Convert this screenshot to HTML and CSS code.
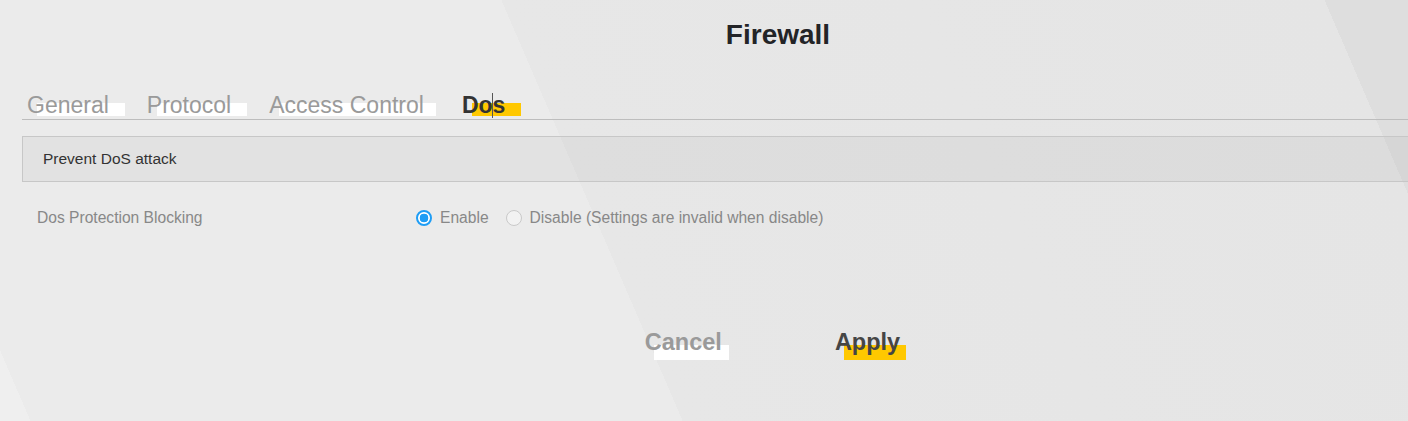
FILE: index.html
```html
<!DOCTYPE html>
<html lang="en">
<head>
<meta charset="utf-8">
<title>Firewall</title>
<link rel="stylesheet" href="styles.css">
</head>
<body>
<div class="page">
  <h1 class="title">Firewall</h1>
  <nav class="tabs">
    <span class="tab">General</span>
    <span class="tab">Protocol</span>
    <span class="tab">Access Control</span>
    <span class="tab active">Dos<span class="caret"></span></span>
  </nav>
  <div class="section">Prevent DoS attack</div>
  <div class="row">
    <div class="row-label">Dos Protection Blocking</div>
    <div class="radios">
      <label class="radio"><span class="dot checked"></span>Enable</label>
      <label class="radio"><span class="dot"></span>Disable (Settings are invalid when disable)</label>
    </div>
  </div>
  <div class="buttons">
    <span class="btn cancel">Cancel</span>
    <span class="btn apply">Apply</span>
  </div>
</div>
</body>
</html>
```

FILE: styles.css
```css
html, body {
  margin: 0;
  padding: 0;
}
body {
  width: 1408px;
  height: 421px;
  overflow: hidden;
  font-family: "Liberation Sans", Arial, sans-serif;
  background: linear-gradient(66.7deg,
    #efefef 0, #efefef 28px,
    #ebebeb 28px, #ebebeb 627px,
    #e7e7e7 627px, #e5e5e5 1383px,
    #dedede 1383px, #dedede 100%);
}
.page {
  margin-left: 22px;
  width: 1512px;
}
.title {
  margin: 0;
  padding-top: 19px;
  height: 92px;
  box-sizing: border-box;
  text-align: center;
  font-size: 28px;
  line-height: 32px;
  font-weight: bold;
  color: #232427;
}
.tabs {
  display: flex;
  gap: 22px;
  padding-left: 5px;
  border-bottom: 1px solid #bdbdbd;
}
.tab {
  position: relative;
  z-index: 0;
  font-size: 23px;
  line-height: 27px;
  color: #9a9a9a;
  padding-right: 16px;
}
.tab::before {
  content: "";
  position: absolute;
  z-index: -1;
  left: 10px;
  right: 0;
  top: 11px;
  height: 13px;
  background: #ffffff;
}
.tab:nth-child(3)::before {
  right: 4px;
}
.tab.active {
  font-weight: bold;
  color: #333333;
}
.tab.active::before {
  background: #ffc800;
}
.caret {
  position: absolute;
  left: 30px;
  top: 1px;
  width: 1px;
  height: 25px;
  background: #555555;
}
.section {
  margin-top: 16px;
  height: 46px;
  box-sizing: border-box;
  border: 1px solid #c7c7c7;
  background: rgba(0, 0, 0, 0.035);
  padding-left: 20px;
  font-size: 15.5px;
  line-height: 44px;
  color: #333333;
}
.row {
  display: grid;
  grid-template-columns: 379px auto;
  margin-top: 21px;
  padding-left: 15px;
  height: 30px;
  align-items: center;
  font-size: 15.6px;
  color: #888888;
}
.radios {
  display: flex;
  align-items: center;
  gap: 17px;
}
.radio {
  display: flex;
  align-items: center;
  gap: 8px;
}
.dot {
  width: 16px;
  height: 16px;
  box-sizing: border-box;
  border-radius: 50%;
  border: 1px solid #c9c9c9;
  background: #f2f2f2;
}
.dot.checked {
  border: 2px solid #1e9df5;
  background: radial-gradient(circle, #1e9df5 0, #1e9df5 4.2px, #ffffff 4.6px);
}
.buttons {
  display: flex;
  justify-content: center;
  gap: 106px;
  margin-top: 94px;
  padding-right: 5px;
}
.btn {
  position: relative;
  z-index: 0;
  font-size: 23.5px;
  line-height: 30px;
  font-weight: bold;
  padding-right: 7px;
}
.btn::before {
  content: "";
  position: absolute;
  z-index: -1;
  left: 9px;
  right: 0;
  top: 18px;
  height: 15px;
}
.cancel {
  color: #9a9a9a;
}
.cancel::before {
  background: #ffffff;
}
.apply {
  color: #454545;
  padding-right: 6px;
}
.apply::before {
  background: #ffc800;
}
```
